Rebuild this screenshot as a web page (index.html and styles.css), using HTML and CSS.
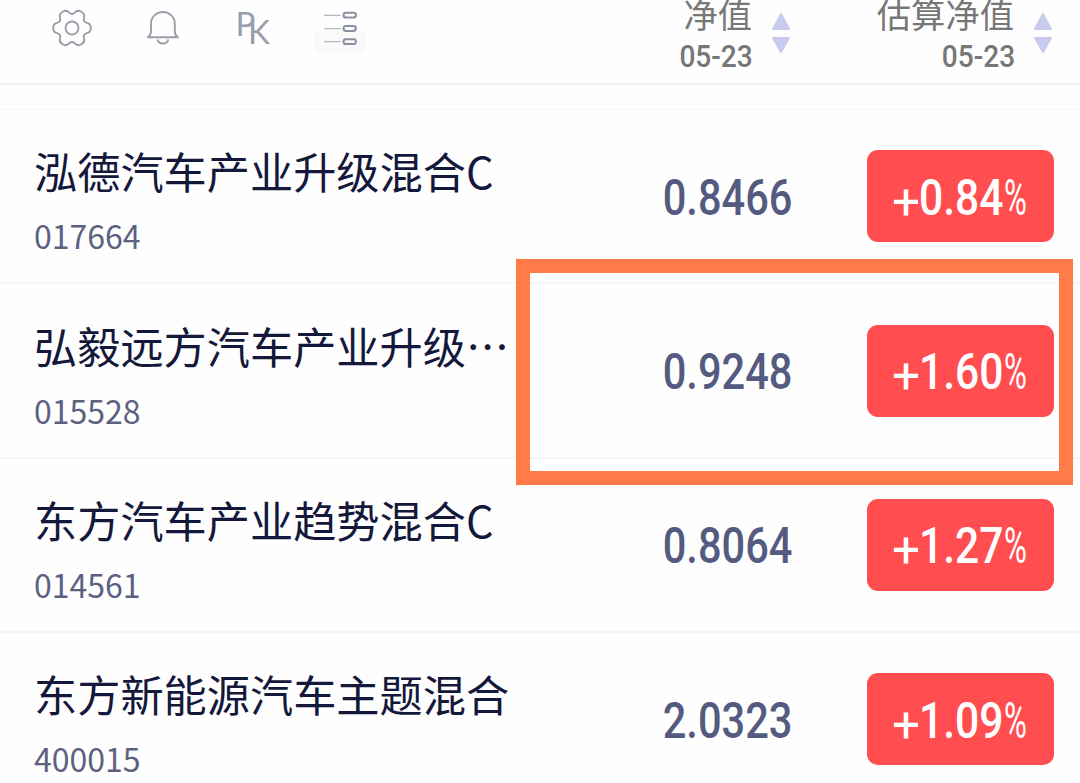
FILE: index.html
```
<!DOCTYPE html>
<html lang="zh-CN">
<head>
  <meta charset="UTF-8" />
  <meta name="viewport" content="width=device-width, initial-scale=1.0"/>
  <title>自选基金</title>
  <link rel="stylesheet" href="styles.css">
</head>
<body>

<div class="header">
  <div class="tools">
    <svg class="icon" width="40" height="40" viewBox="-20 -20 40 40">
      <path d="M14.37 5.39A3.34 3.34 0 0 0 11.86 9.75A5.5 5.5 0 0 1 2.52 15.14A3.34 3.34 0 0 0 -2.52 15.14A5.5 5.5 0 0 1 -11.86 9.75A3.34 3.34 0 0 0 -14.37 5.39A5.5 5.5 0 0 1 -14.37 -5.39A3.34 3.34 0 0 0 -11.86 -9.75A5.5 5.5 0 0 1 -2.52 -15.14A3.34 3.34 0 0 0 2.52 -15.14A5.5 5.5 0 0 1 11.86 -9.75A3.34 3.34 0 0 0 14.37 -5.39A5.5 5.5 0 0 1 14.37 5.39Z"/>
      <circle r="6.5"/>
    </svg>
    <svg class="icon" width="40" height="40" viewBox="0 0 40 40">
      <path d="M4.2 29.2H35.6M5.2 29C7.4 27.5 8 26 8 23.5V15.5A11.9 11.5 0 0 1 31.8 15.5V23.5C31.8 26 32.4 27.5 34.6 29M14.6 31.5A5.4 5 0 0 0 25.2 31.5"/>
    </svg>
    <svg class="icon pk" width="40" height="40" viewBox="0 0 40 40">
      <text x="1.5" y="28">P</text>
      <text x="14" y="36.3">K</text>
    </svg>
    <svg class="icon list" width="52" height="46" viewBox="0 0 52 46">
      <rect class="shade" x="0" y="23" width="52" height="23"/>
      <path class="thin" d="M10.3 7.3H26.7M10.3 20.6H26.7M10.3 33.7H26.7"/>
      <rect x="29.5" y="4.8" width="12.4" height="4.8" rx="2.4"/>
      <rect x="29.5" y="18.1" width="12.4" height="4.8" rx="2.4"/>
      <rect x="29.5" y="31.3" width="12.4" height="4.8" rx="2.4"/>
    </svg>
  </div>
  <div class="col">
    <div class="col-text">
      <div class="col-name">净值</div>
      <div class="col-date">05-23</div>
    </div>
    <svg class="sort" width="20" height="42" viewBox="0 0 20 42">
      <path d="M10 2L18 17H2ZM10 40L18 26H2Z"/>
    </svg>
  </div>
  <div class="col col-last">
    <div class="col-text">
      <div class="col-name">估算净值</div>
      <div class="col-date">05-23</div>
    </div>
    <svg class="sort" width="20" height="42" viewBox="0 0 20 42">
      <path d="M10 2L18 17H2ZM10 40L18 26H2Z"/>
    </svg>
  </div>
</div>

<div class="list-body">
  <div class="row">
    <div class="fund">
      <div class="name">泓德汽车产业升级混合C</div>
      <div class="code">017664</div>
    </div>
    <div class="value"><span>0.8466</span></div>
    <div class="badge"><span class="sign">+</span><span class="num">0.84</span><span class="pct">%</span></div>
  </div>
  <div class="row">
    <div class="fund">
      <div class="name">弘毅远方汽车产业升级…</div>
      <div class="code">015528</div>
    </div>
    <div class="value"><span>0.9248</span></div>
    <div class="badge"><span class="sign">+</span><span class="num">1.60</span><span class="pct">%</span></div>
    <div class="highlight"></div>
  </div>
  <div class="row">
    <div class="fund">
      <div class="name">东方汽车产业趋势混合C</div>
      <div class="code">014561</div>
    </div>
    <div class="value"><span>0.8064</span></div>
    <div class="badge"><span class="sign">+</span><span class="num">1.27</span><span class="pct">%</span></div>
  </div>
  <div class="row">
    <div class="fund">
      <div class="name">东方新能源汽车主题混合</div>
      <div class="code">400015</div>
    </div>
    <div class="value"><span>2.0323</span></div>
    <div class="badge"><span class="sign">+</span><span class="num">1.09</span><span class="pct">%</span></div>
  </div>
</div>

</body>
</html>
```
FILE: styles.css
```
html, body {
  margin: 0;
  padding: 0;
  height: 100%;
  overflow: hidden;
  background: #fefefe;
  font-family: "Noto Sans CJK SC", sans-serif;
}

.header {
  display: flex;
  height: 83px;
  border-bottom: 2px solid #f0f0f3;
}

.tools {
  display: flex;
  flex: 1;
  align-items: flex-start;
  padding: 8px 0 0 52px;
}

.icon {
  overflow: visible;
  fill: none;
  stroke: #9a9dab;
  stroke-width: 1.9;
  margin-right: 51px;
}

.pk {
  margin-right: 40px;
}

.pk text {
  fill: #9a9dab;
  stroke: none;
  font: 400 33px Lato, sans-serif;
}

.list {
  margin-right: 0;
  stroke: #8b8fa3;
  stroke-width: 2;
}

.list .thin {
  stroke: #b4b6c0;
  stroke-width: 1.2;
}

.list .shade {
  fill: #fafafb;
  stroke: none;
}

.col {
  display: flex;
  align-items: flex-start;
  width: 262px;
  justify-content: flex-end;
}

.col-last {
  padding-right: 27px;
}

.col-text {
  margin-right: 19px;
  text-align: right;
  color: #777;
}

.col-name {
  height: 38px;
  margin-top: -6px;
  font-size: 34.3px;
  line-height: 38px;
}

.col-date {
  margin-right: -1px;
  font: 500 30.5px/50px Roboto, sans-serif;
  transform: scaleX(0.92);
  transform-origin: right;
}

.sort {
  margin-top: 12px;
  fill: #c8cbeb;
  stroke: #c8cbeb;
  stroke-width: 2;
  stroke-linejoin: round;
}

.list-body {
  margin-top: 24px;
  border-top: 1px solid #f6f6f8;
}

.row {
  position: relative;
  display: flex;
  align-items: center;
  box-sizing: border-box;
  height: 174.4px;
  padding: 0 26px 0 34px;
  border-bottom: 2px solid #f5f5f7;
}

.fund {
  flex: 1;
  padding-top: 5px;
}

.name {
  font-size: 43.2px;
  line-height: 64px;
  color: #14183a;
  white-space: nowrap;
}

.code {
  margin-top: 9px;
  font-size: 32px;
  line-height: 48px;
  color: #5d6180;
}

.value {
  width: 200px;
  margin-right: 75px;
  padding-top: 3px;
  text-align: right;
  font: 500 49.5px/60px Roboto, sans-serif;
  color: #555b80;
}

.value span {
  display: inline-block;
  transform: scaleX(0.84);
  transform-origin: right;
}

.badge {
  display: flex;
  align-items: center;
  box-sizing: border-box;
  width: 187px;
  height: 92px;
  padding: 3px 0 0 25px;
  border-radius: 11px;
  background: #ff4d50;
  color: #fff;
  font: 500 49.5px/60px Roboto, sans-serif;
}

.badge span {
  transform-origin: left;
}

.sign {
  width: 27px;
  padding-top: 8px;
  font-weight: 400;
}

.num {
  width: 85px;
  transform: scaleX(0.86);
}

.pct {
  font-weight: 400;
  transform: scaleX(0.63);
}

/* frame around the picked fund */
.highlight {
  position: absolute;
  top: -25px;
  right: 7px;
  width: 529px;
  height: 198px;
  border: 14px solid #ff7b47;
}
```
